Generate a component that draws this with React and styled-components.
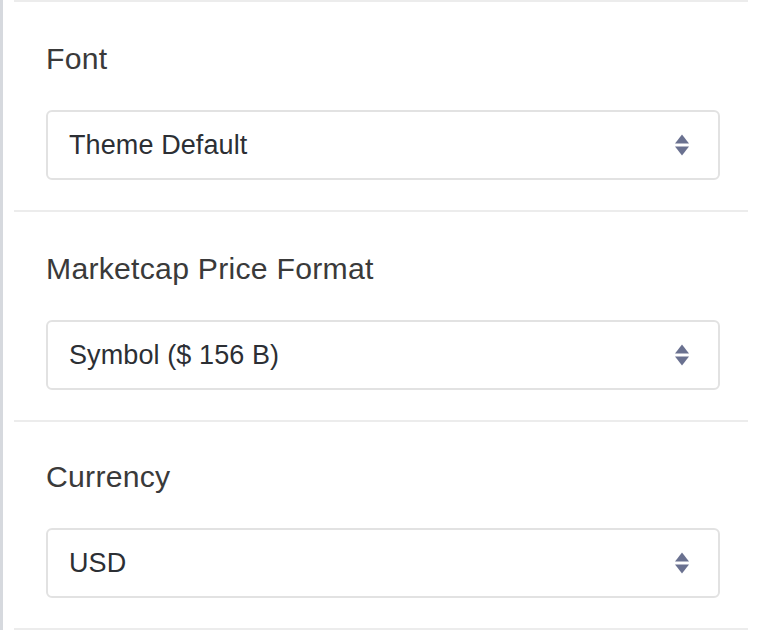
import React from "react";
import styled, { createGlobalStyle } from "styled-components";

const GlobalStyle = createGlobalStyle`
  html, body { margin: 0; padding: 0; background: #ffffff; }
  body { font-family: "Liberation Sans", Arial, sans-serif; overflow: hidden; }
`;

const Panel = styled.div`
  width: 760px;
  height: 630px;
  box-sizing: border-box;
  border-left: 3px solid #d6d9de;
  padding: 0 12px 0 11px;
  background: #ffffff;
`;

const List = styled.div`
  border-top: 2px solid #ececec;
`;

const Section = styled.section`
  padding: 40px 28px 30px 32px;
  border-bottom: 2px solid #ececec;
  &:last-child {
    padding-top: 38px;
  }
`;

const Label = styled.div`
  font-size: 30.2px;
  line-height: 34px;
  color: #3a3a3a;
  letter-spacing: 0.25px;
  margin-bottom: 34px;
`;

const SelectWrap = styled.div`
  position: relative;
`;

const Select = styled.select`
  appearance: none;
  -webkit-appearance: none;
  display: block;
  width: 100%;
  height: 70px;
  box-sizing: border-box;
  border: 2px solid #e2e2e2;
  border-radius: 6px;
  background: #ffffff;
  padding: 0 60px 0 21px;
  font-family: "Liberation Sans", Arial, sans-serif;
  font-size: 27px;
  letter-spacing: 0.1px;
  color: #2c2f34;
  outline: none;
`;

const Arrows = styled.svg`
  position: absolute;
  right: 30px;
  top: 50%;
  transform: translateY(-50%);
  width: 16px;
  height: 24px;
  pointer-events: none;
`;

function SortIcon() {
  return (
    <Arrows viewBox="0 0 16 24">
      <path d="M1 10.5 L8 1.5 L15 10.5 Z" fill="#6a7190" />
      <path d="M1 13.5 L15 13.5 L8 22.5 Z" fill="#6a7190" />
    </Arrows>
  );
}

const fields = [
  { label: "Font", value: "Theme Default", options: ["Theme Default", "Inter", "Roboto"] },
  {
    label: "Marketcap Price Format",
    value: "Symbol ($ 156 B)",
    options: ["Symbol ($ 156 B)", "Full ($ 156,000,000,000)"],
  },
  { label: "Currency", value: "USD", options: ["USD", "EUR", "GBP"] },
];

export default function App() {
  return (
    <>
      <GlobalStyle />
      <Panel>
        <List>
          {fields.map((f) => (
            <Section key={f.label}>
              <Label>{f.label}</Label>
              <SelectWrap>
                <Select defaultValue={f.value}>
                  {f.options.map((o) => (
                    <option key={o} value={o}>
                      {o}
                    </option>
                  ))}
                </Select>
                <SortIcon />
              </SelectWrap>
            </Section>
          ))}
        </List>
      </Panel>
    </>
  );
}
